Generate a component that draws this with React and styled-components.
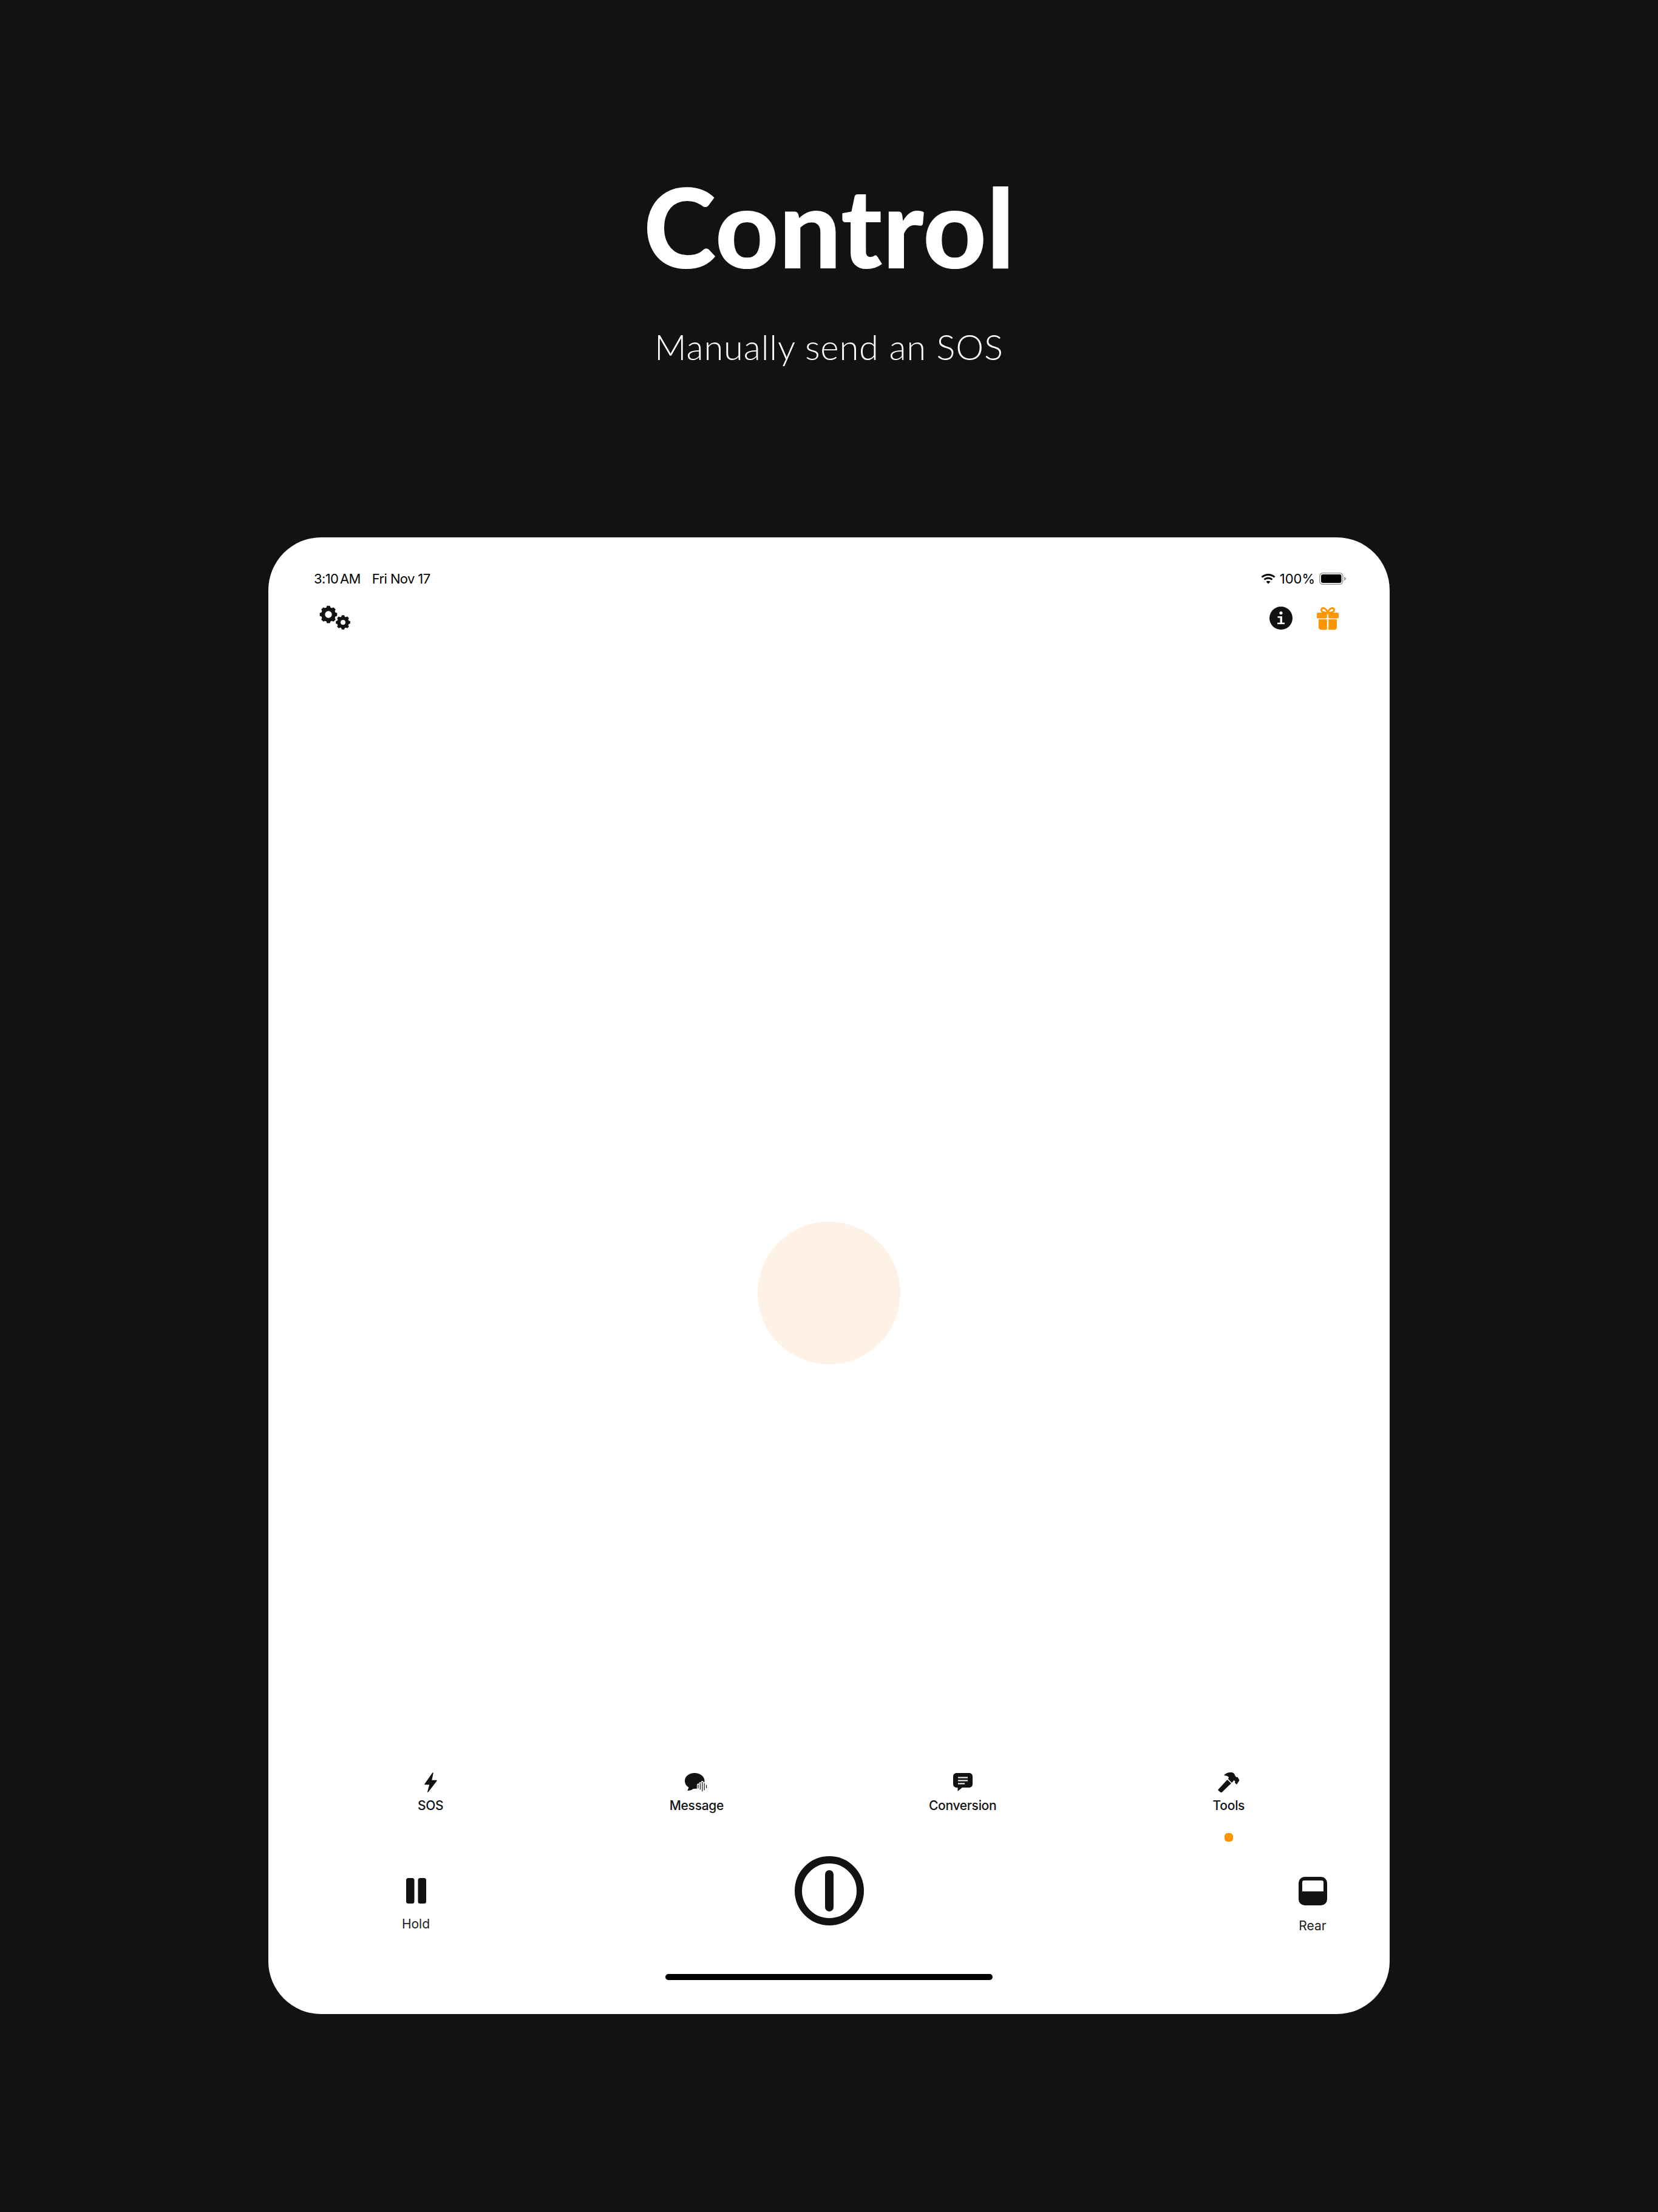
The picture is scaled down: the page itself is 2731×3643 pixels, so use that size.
import React from 'react';
import styled, { createGlobalStyle } from 'styled-components';

const ink = '#111313';
const orange = '#ff9500';

const GlobalStyle = createGlobalStyle`
  html, body {
    margin: 0;
    padding: 0;
    background: ${ink};
  }
`;

// teeth outline for the settings gears
const gearPath = (cx, cy, outer, inner, hole, teeth = 8) => {
  const pts = [];
  const step = (Math.PI * 2) / teeth;
  for (let i = 0; i < teeth; i++) {
    const a = i * step - Math.PI / 2;
    [[-0.36, inner], [-0.22, outer], [0.22, outer], [0.36, inner]].forEach(([f, r]) => {
      pts.push(`${(cx + Math.cos(a + f * step) * r).toFixed(2)} ${(cy + Math.sin(a + f * step) * r).toFixed(2)}`);
    });
  }
  return `M${pts.join('L')}Z M${cx - hole} ${cy}a${hole} ${hole} 0 1 0 ${hole * 2} 0a${hole} ${hole} 0 1 0 ${-hole * 2} 0Z`;
};

const GearsIcon = () => (
  <svg width="52" height="42" viewBox="0 0 52 42" fill={ink}>
    <path fillRule="evenodd" d={gearPath(15, 15, 14.5, 12, 5.7)} />
    <path fillRule="evenodd" d={gearPath(39, 28, 12, 9.8, 4)} />
  </svg>
);

const WifiIcon = () => (
  <svg width="24" height="18" viewBox="0 0 24 18" fill="none" stroke="#000" strokeWidth="3">
    <path d="M1.5 6.5C7.5 1 16.5 1 22.5 6.5" />
    <path d="M5.5 10.5C9 7.2 15 7.2 18.5 10.5" />
    <path d="M12 17.5L8.6 14C10.4 12.3 13.6 12.3 15.4 14Z" fill="#000" stroke="none" />
  </svg>
);

const BatteryIcon = () => (
  <svg width="44" height="20" viewBox="0 0 44 20">
    <rect x="0.75" y="0.75" width="38" height="18.5" rx="5" fill="none" stroke="#9a9a9a" strokeWidth="1.5" />
    <rect x="3" y="3" width="33.5" height="14" rx="3" fill="#000" />
    <path d="M41 7C43 7.6 44 8.6 44 10C44 11.4 43 12.4 41 13Z" fill="#9a9a9a" />
  </svg>
);

const InfoIcon = () => (
  <svg width="38" height="38" viewBox="0 0 38 38">
    <circle cx="19" cy="19" r="19" fill={ink} />
    <circle cx="19" cy="10.5" r="2.6" fill="#fff" />
    <path d="M13.5 16H21V26.5H25V29H13V26.5H17.5V18.5H13.5Z" fill="#fff" />
  </svg>
);

const GiftIcon = () => (
  <svg width="36" height="38" viewBox="0 0 36 38">
    <path d="M18 10C15 2 8 0 7.5 5.5C7.2 9 12 10 18 10C24 10 28.8 9 28.5 5.5C28 0 21 2 18 10Z" fill="none" stroke={orange} strokeWidth="3" />
    <rect x="0" y="10" width="16.8" height="9.5" rx="2" fill={orange} />
    <rect x="19.2" y="10" width="16.8" height="9.5" rx="2" fill={orange} />
    <path d="M3 21H16.8V38H7C4.5 38 3 36.5 3 34Z" fill={orange} />
    <path d="M19.2 21H33V34C33 36.5 31.5 38 29 38H19.2Z" fill={orange} />
  </svg>
);

const BoltIcon = () => (
  <svg width="21" height="33" viewBox="0 0 21 33" fill={ink} stroke={ink} strokeWidth="1.5" strokeLinejoin="round">
    <path d="M14 1L1 19.5H9.2L5.8 32L20 13.5H11.4Z" />
  </svg>
);

const MessageIcon = () => (
  <svg width="38" height="31" viewBox="0 0 38 31" fill={ink}>
    <path d="M16 0C7 0 0 5.5 0 13C0 17.5 2.6 21.5 6.5 23.8C6 25.8 5 27.6 4.2 29C7.6 29.4 11.5 28 14 26C14.8 26.1 15.4 26.1 16 26.1C25 26.1 32.5 20.5 32.5 13C32.5 5.5 25 0 16 0Z" />
    <path d="M22 19.5V25M25.4 17V27M28.8 15V30M32.2 17V28M35.6 20V24.5" stroke="#fff" strokeWidth="4.2" strokeLinecap="round" />
    <path d="M22 19.5V25M25.4 17V27M28.8 15V30M32.2 17V28M35.6 20V24.5" stroke={ink} strokeWidth="1.2" strokeLinecap="round" />
  </svg>
);

const ConversionIcon = () => (
  <svg width="32" height="30" viewBox="0 0 32 30">
    <path d="M6 0H26C29.8 0 32 2.2 32 6V18C32 21.8 29.8 24 26 24H15L7.5 30V24H6C2.2 24 0 21.8 0 18V6C0 2.2 2.2 0 6 0Z" fill={ink} />
    <path d="M8 7.5H24M8 12.5H24M8 17.5H19" stroke="#fff" strokeWidth="1.8" />
  </svg>
);

const HammerIcon = () => (
  <svg width="36" height="33" viewBox="0 0 36 33" fill={ink}>
    <path d="M0.8 28L15.5 12L22 18L7 32.5C6 33.3 5 33.3 4 32.5L1 30C0.2 29.5 0.2 28.7 0.8 28Z" />
    <path d="M10 5C13 1 18 -0.5 23 0C26 0.5 28 3 29 6.5L31 8L32.5 7.5L35.5 13L31 20L28 17L28.5 14.5L26.5 13L23 17L17 11L18 8C16.5 6 13.5 5 10 5Z" />
  </svg>
);

const HoldIcon = () => (
  <svg width="33" height="42" viewBox="0 0 33 42" fill={ink}>
    <rect width="13.5" height="42" rx="3.5" />
    <rect x="19.5" width="13.5" height="42" rx="3.5" />
  </svg>
);

const RearIcon = () => (
  <svg width="47" height="47" viewBox="0 0 47 47">
    <rect width="47" height="47" rx="10" fill={ink} />
    <path d="M9 6H38C40 6 41 7 41 9V24H6V9C6 7 7 6 9 6Z" fill="#fff" />
  </svg>
);

const PowerIcon = () => (
  <svg width="114" height="114" viewBox="0 0 114 114">
    <circle cx="57" cy="57" r="51" fill="none" stroke={ink} strokeWidth="12" />
    <rect x="50" y="23" width="14" height="68" rx="7" fill={ink} />
  </svg>
);

const tabs = [
  { label: 'SOS', icon: <BoltIcon /> },
  { label: 'Message', icon: <MessageIcon /> },
  { label: 'Conversion', icon: <ConversionIcon /> },
  { label: 'Tools', icon: <HammerIcon />, active: true },
];

const App = () => {
  return (
    <>
      <GlobalStyle />
      <Page>
        <Hero>
          <Title>Control</Title>
          <Subtitle>Manually send an SOS</Subtitle>
        </Hero>
        <Device>
          <StatusBar>
            <Clock>
              <Time>3:10 AM</Time>
              <span>Fri Nov 17</span>
            </Clock>
            <Levels>
              <WifiIcon />
              <span>100%</span>
              <BatteryIcon />
            </Levels>
          </StatusBar>
          <TopBar>
            <GearsIcon />
            <TopActions>
              <InfoIcon />
              <GiftIcon />
            </TopActions>
          </TopBar>
          <Stage>
            <Glow />
          </Stage>
          <Tabs>
            {tabs.map((tab) => (
              <Tab key={tab.label}>
                <TabIcon>{tab.icon}</TabIcon>
                <TabLabel>{tab.label}</TabLabel>
                {tab.active && <ActiveDot />}
              </Tab>
            ))}
          </Tabs>
          <Controls>
            <SideControl $offset={36} $align="start" $inset={116}>
              <HoldIcon />
              <ControlLabel>Hold</ControlLabel>
            </SideControl>
            <PowerIcon />
            <SideControl $offset={34} $align="end">
              <RearIcon />
              <ControlLabel>Rear</ControlLabel>
            </SideControl>
          </Controls>
          <HomeIndicator />
        </Device>
      </Page>
    </>
  );
};

const Page = styled.div`
  width: 2731px;
  height: 3643px;
  background: ${ink};
  display: flex;
  flex-direction: column;
  align-items: center;
  overflow: hidden;
`;

const Hero = styled.header`
  height: 885px;
  box-sizing: border-box;
  padding-top: 262px;
  display: flex;
  flex-direction: column;
  align-items: center;
  color: #fff;
  font-family: Lato, "Noto Sans", sans-serif;
`;

const Title = styled.h1`
  margin: 0;
  font-size: 182px;
  line-height: 220px;
  font-weight: 900;
`;

const Subtitle = styled.p`
  margin: 54px 0 0;
  font-size: 58px;
  line-height: 70px;
  font-weight: 300;
  letter-spacing: 0.8px;
`;

const Device = styled.main`
  width: 1847px;
  height: 2432px;
  box-sizing: border-box;
  padding-top: 54px;
  background: #fff;
  border-radius: 87px;
  display: flex;
  flex-direction: column;
  font-family: Inter, "Liberation Sans", sans-serif;
  color: ${ink};
`;

const StatusBar = styled.div`
  height: 28px;
  padding: 0 72px 0 75px;
  display: flex;
  justify-content: space-between;
  align-items: center;
  font-size: 22px;
  color: #000;
`;

const Clock = styled.div`
  display: flex;
  gap: 19px;
  letter-spacing: -0.6px;
`;

const Time = styled.span`
  word-spacing: -3px;
`;

const Levels = styled.div`
  display: flex;
  align-items: center;
  gap: 7px;
`;

const TopBar = styled.div`
  margin-top: 30px;
  padding: 0 84px;
  height: 42px;
  display: flex;
  justify-content: space-between;
  align-items: center;
`;

const TopActions = styled.div`
  display: flex;
  align-items: center;
  gap: 40px;
`;

const Stage = styled.div`
  flex: 1;
  padding-top: 973px;
  display: flex;
  justify-content: center;
`;

const Glow = styled.div`
  width: 235px;
  height: 235px;
  border-radius: 50%;
  background: #fef1e6;
`;

const Tabs = styled.nav`
  padding: 0 46px 0 48px;
  display: grid;
  grid-template-columns: repeat(4, 1fr);
  height: 113px;
`;

const Tab = styled.div`
  display: flex;
  flex-direction: column;
  align-items: center;
`;

const TabIcon = styled.div`
  height: 34px;
  display: flex;
  align-items: center;
  justify-content: center;
`;

const TabLabel = styled.div`
  margin-top: 8px;
  font-size: 21px;
  line-height: 28px;
  font-weight: 500;
  letter-spacing: -0.3px;
`;

const ActiveDot = styled.div`
  margin-top: 31px;
  width: 14px;
  height: 14px;
  border-radius: 5px;
  background: ${orange};
`;

const Controls = styled.div`
  margin-top: 26px;
  padding: 0 77px;
  display: grid;
  grid-template-columns: 1fr auto 1fr;
  align-items: start;
`;

const SideControl = styled.div`
  width: 100px;
  margin-left: ${(p) => p.$inset || 0}px;
  padding-top: ${(p) => p.$offset}px;
  justify-self: ${(p) => p.$align};
  display: flex;
  flex-direction: column;
  align-items: center;
`;

const ControlLabel = styled.div`
  margin-top: 21px;
  font-size: 21px;
  line-height: 26px;
  color: #222;
`;

const HomeIndicator = styled.div`
  align-self: center;
  margin: 66px 0 56px;
  width: 539px;
  height: 10px;
  border-radius: 5px;
  background: #000;
`;

export default App;
